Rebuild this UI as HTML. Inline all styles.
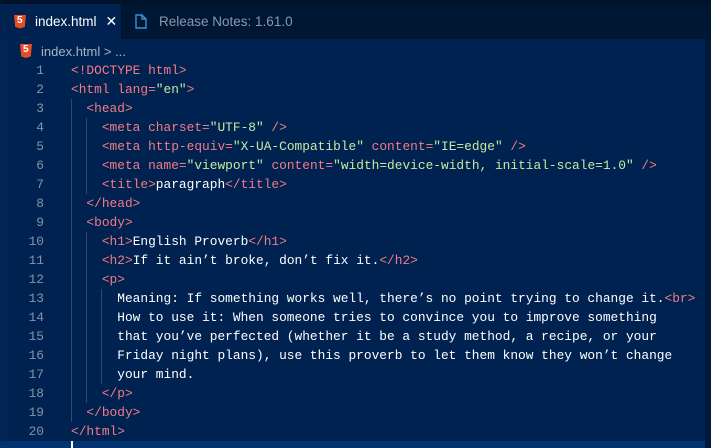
<!DOCTYPE html>
<html><head><style>
*{margin:0;padding:0;box-sizing:border-box}
body{width:711px;height:448px;overflow:hidden;background:#002251;font-family:"Liberation Sans",sans-serif;position:relative}
.top{position:absolute;left:0;top:0;width:711px;height:4px;background:#00132a}
.tabs{position:absolute;left:0;top:4px;width:711px;height:35px;background:#001733}
.tab{position:absolute;top:0;height:35px;display:flex;align-items:center;font-size:13.5px}
.t1{left:0;width:122px;background:#002251;color:#fff;padding-left:14px;border-right:1px solid #00132a}
.t2{left:123px;color:#8a98ab;padding-left:12px}
.bc{position:absolute;left:20px;top:42px;color:#a8b4c4;font-size:13px;display:flex;align-items:center;height:18px}
.h5{display:inline-block;width:12px;height:14px;background:#e44d26;clip-path:polygon(0 0,100% 0,90% 88%,50% 100%,10% 88%);position:relative;margin-right:9px}
.h5:after{content:"5";position:absolute;left:3px;top:0px;color:#fff;font-size:10px;font-weight:bold;line-height:12px}
.code{position:absolute;left:0;top:61px;font-family:"Liberation Mono",monospace;font-size:12.85px;color:#fff}
.l{height:19px;line-height:19px;white-space:pre;position:relative}
.n{display:inline-block;width:44px;text-align:right;color:#8593a8;margin-right:27px}
.t{color:#f47b85}.s{color:#c6eaa0}
.g{position:absolute;top:0;width:1px;height:19px;background:#34476a}
.cur{position:absolute;left:0;top:441px;width:705px;height:7px;background:#003370}
.caret{position:absolute;left:71px;top:441px;width:2px;height:7px;background:#fff}
.sb{position:absolute;right:0;top:39px;width:6px;height:409px;background:#001a3e}
.lg{position:absolute;left:0;top:39px;width:8px;height:409px;background:#012656}
</style></head><body>
<div class="top"></div>
<div class="tabs">
<div class="tab t1"><span class="h5"></span><span>index.html</span><span style="margin-left:9px;font-size:14px">✕</span></div>
<div class="tab t2"><svg width="12" height="15" viewBox="0 0 12 15" style="margin-right:12px"><path d="M1 1h6l4 4v9H1z M7 1v4h4" fill="none" stroke="#3d8fd6" stroke-width="1.4"/></svg>Release Notes: 1.61.0</div>
</div>
<div class="lg"></div>
<div class="bc"><span class="h5"></span>index.html &gt; ...</div>
<div class="cur"></div><div class="caret"></div>
<div class="code">
<div class="l"><span class="n">1</span><span class="t">&lt;!DOCTYPE html&gt;</span></div>
<div class="l"><span class="n">2</span><span class="t">&lt;html lang=</span><span class="s">"en"</span><span class="t">&gt;</span></div>
<div class="l"><i class="g" style="left:71px"></i><span class="n">3</span>  <span class="t">&lt;head&gt;</span></div>
<div class="l"><i class="g" style="left:71px"></i><i class="g" style="left:86px"></i><span class="n">4</span>    <span class="t">&lt;meta charset=</span><span class="s">"UTF-8"</span> <span class="t">/&gt;</span></div>
<div class="l"><i class="g" style="left:71px"></i><i class="g" style="left:86px"></i><span class="n">5</span>    <span class="t">&lt;meta http-equiv=</span><span class="s">"X-UA-Compatible"</span> <span class="t">content=</span><span class="s">"IE=edge"</span> <span class="t">/&gt;</span></div>
<div class="l"><i class="g" style="left:71px"></i><i class="g" style="left:86px"></i><span class="n">6</span>    <span class="t">&lt;meta name=</span><span class="s">"viewport"</span> <span class="t">content=</span><span class="s">"width=device-width, initial-scale=1.0"</span> <span class="t">/&gt;</span></div>
<div class="l"><i class="g" style="left:71px"></i><i class="g" style="left:86px"></i><span class="n">7</span>    <span class="t">&lt;title&gt;</span>paragraph<span class="t">&lt;/title&gt;</span></div>
<div class="l"><i class="g" style="left:71px"></i><span class="n">8</span>  <span class="t">&lt;/head&gt;</span></div>
<div class="l"><i class="g" style="left:71px"></i><span class="n">9</span>  <span class="t">&lt;body&gt;</span></div>
<div class="l"><i class="g" style="left:71px"></i><i class="g" style="left:86px"></i><span class="n">10</span>    <span class="t">&lt;h1&gt;</span>English Proverb<span class="t">&lt;/h1&gt;</span></div>
<div class="l"><i class="g" style="left:71px"></i><i class="g" style="left:86px"></i><span class="n">11</span>    <span class="t">&lt;h2&gt;</span>If it ain’t broke, don’t fix it.<span class="t">&lt;/h2&gt;</span></div>
<div class="l"><i class="g" style="left:71px"></i><i class="g" style="left:86px"></i><span class="n">12</span>    <span class="t">&lt;p&gt;</span></div>
<div class="l"><i class="g" style="left:71px"></i><i class="g" style="left:86px"></i><i class="g" style="left:101px"></i><span class="n">13</span>      Meaning: If something works well, there’s no point trying to change it.<span class="t">&lt;br&gt;</span></div>
<div class="l"><i class="g" style="left:71px"></i><i class="g" style="left:86px"></i><i class="g" style="left:101px"></i><span class="n">14</span>      How to use it: When someone tries to convince you to improve something</div>
<div class="l"><i class="g" style="left:71px"></i><i class="g" style="left:86px"></i><i class="g" style="left:101px"></i><span class="n">15</span>      that you’ve perfected (whether it be a study method, a recipe, or your</div>
<div class="l"><i class="g" style="left:71px"></i><i class="g" style="left:86px"></i><i class="g" style="left:101px"></i><span class="n">16</span>      Friday night plans), use this proverb to let them know they won’t change</div>
<div class="l"><i class="g" style="left:71px"></i><i class="g" style="left:86px"></i><i class="g" style="left:101px"></i><span class="n">17</span>      your mind.</div>
<div class="l"><i class="g" style="left:71px"></i><i class="g" style="left:86px"></i><span class="n">18</span>    <span class="t">&lt;/p&gt;</span></div>
<div class="l"><i class="g" style="left:71px"></i><span class="n">19</span>  <span class="t">&lt;/body&gt;</span></div>
<div class="l"><span class="n">20</span><span class="t">&lt;/html&gt;</span></div>
</div>
<div class="sb"></div>
</body></html>
